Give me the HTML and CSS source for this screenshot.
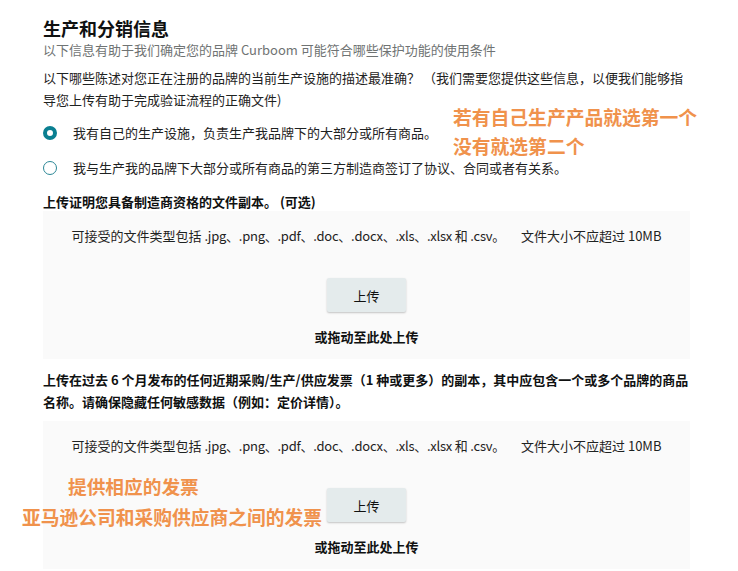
FILE: index.html
```html
<!DOCTYPE html>
<html lang="zh-CN">
<head>
<meta charset="utf-8">
<title>生产和分销信息</title>
<link rel="stylesheet" href="styles.css">
</head>
<body>
<main class="page">
  <header class="head">
    <h1 class="title">生产和分销信息</h1>
    <p class="subtitle">以下信息有助于我们确定您的品牌 Curboom 可能符合哪些保护功能的使用条件</p>
  </header>

  <p class="question">以下哪些陈述对您正在注册的品牌的当前生产设施的描述最准确？ （我们需要您提供这些信息，以便我们能够指<br>导您上传有助于完成验证流程的正确文件)</p>

  <div class="radios">
    <label class="radio-row">
      <span class="radio radio-on"></span>
      <span class="radio-text">我有自己的生产设施，负责生产我品牌下的大部分或所有商品。</span>
    </label>
    <label class="radio-row">
      <span class="radio"></span>
      <span class="radio-text">我与生产我的品牌下大部分或所有商品的第三方制造商签订了协议、合同或者有关系。</span>
    </label>
  </div>

  <p class="label label-one">上传证明您具备制造商资格的文件副本。 (可选)</p>
  <section class="dropzone">
    <p class="types">可接受的文件类型包括 <span class="ext">.jpg、.png、.pdf、.doc、.docx、.xls、.xlsx 和 .csv。</span><span class="size">文件大小不应超过 10MB</span></p>
    <button class="upload" type="button">上传</button>
    <p class="drag">或拖动至此处上传</p>
  </section>

  <p class="label label-two">上传在过去 6 个月发布的任何近期采购/生产/供应发票（1 种或更多）的副本，其中应包含一个或多个品牌的商品<br>名称。请确保隐藏任何敏感数据（例如：定价详情）。</p>
  <section class="dropzone">
    <p class="types">可接受的文件类型包括 <span class="ext">.jpg、.png、.pdf、.doc、.docx、.xls、.xlsx 和 .csv。</span><span class="size">文件大小不应超过 10MB</span></p>
    <button class="upload" type="button">上传</button>
    <p class="drag">或拖动至此处上传</p>
  </section>

  <div class="note note-top">若有自己生产产品就选第一个<br>没有就选第二个</div>
  <div class="note note-b1">提供相应的发票</div>
  <div class="note note-b2">亚马逊公司和采购供应商之间的发票</div>
</main>
</body>
</html>
```
FILE: styles.css
```css
html, body {
  margin: 0;
  padding: 0;
  background: #ffffff;
}

body {
  font-family: "Noto Sans CJK SC", "Noto Sans", sans-serif;
  color: #0f1111;
  font-size: 13px;
  overflow: hidden;
}

.page {
  position: relative;
  width: 647px;
  padding: 17px 0 0 43px;
  box-sizing: content-box;
}

p, h1 {
  margin: 0;
}

.title {
  font-size: 18px;
  line-height: 22px;
  font-weight: 700;
  color: #0f1111;
}

.subtitle {
  font-size: 13px;
  line-height: 22px;
  color: #6f7373;
}

.question {
  margin-top: 6px;
  line-height: 22px;
  color: #1e2222;
}

.radios {
  display: flex;
  flex-direction: column;
  gap: 13px;
  margin-top: 11px;
}

.radio-row {
  display: flex;
  align-items: center;
  height: 22px;
  gap: 16px;
}

.radio {
  width: 14px;
  height: 14px;
  border-radius: 50%;
  border: 1.3px solid #2b8796;
  box-sizing: border-box;
  flex: none;
  background: #fff;
}

.radio-on {
  border: 4.5px solid #0a7f91;
}

.radio-text {
  line-height: 22px;
  color: #1e2222;
}

.label {
  font-weight: 700;
  line-height: 22px;
}

.label-one {
  margin-top: 14px;
  line-height: 18px;
}

.label-two {
  margin-top: 10px;
  margin-bottom: 8px;
}

.dropzone {
  background: #fafafa;
  display: flex;
  flex-direction: column;
  align-items: center;
  padding: 14px 0 11px;
}

.types {
  line-height: 22px;
  color: #1e2222;
}

.ext {
  letter-spacing: -0.25px;
}

.size {
  margin-left: 16px;
}

.upload {
  margin-top: 31px;
  width: 79px;
  height: 34px;
  border: none;
  border-radius: 2px;
  background: #e4ebec;
  box-shadow: 0 1px 2px rgba(0, 0, 0, 0.22);
  font-family: inherit;
  font-size: 13px;
  color: #0f1111;
  padding: 0;
}

.drag {
  margin-top: 14px;
  line-height: 22px;
  font-weight: 700;
}

.note {
  position: absolute;
  color: #f0924c;
  font-weight: 700;
  font-size: 18.8px;
  white-space: nowrap;
}

.note-top {
  left: 453px;
  top: 102px;
  line-height: 29px;
}

.note-b1 {
  left: 68px;
  top: 471px;
  line-height: 30px;
  font-size: 18.7px;
}

.note-b2 {
  left: 22px;
  top: 502px;
  line-height: 30px;
  font-size: 18.75px;
}
```
